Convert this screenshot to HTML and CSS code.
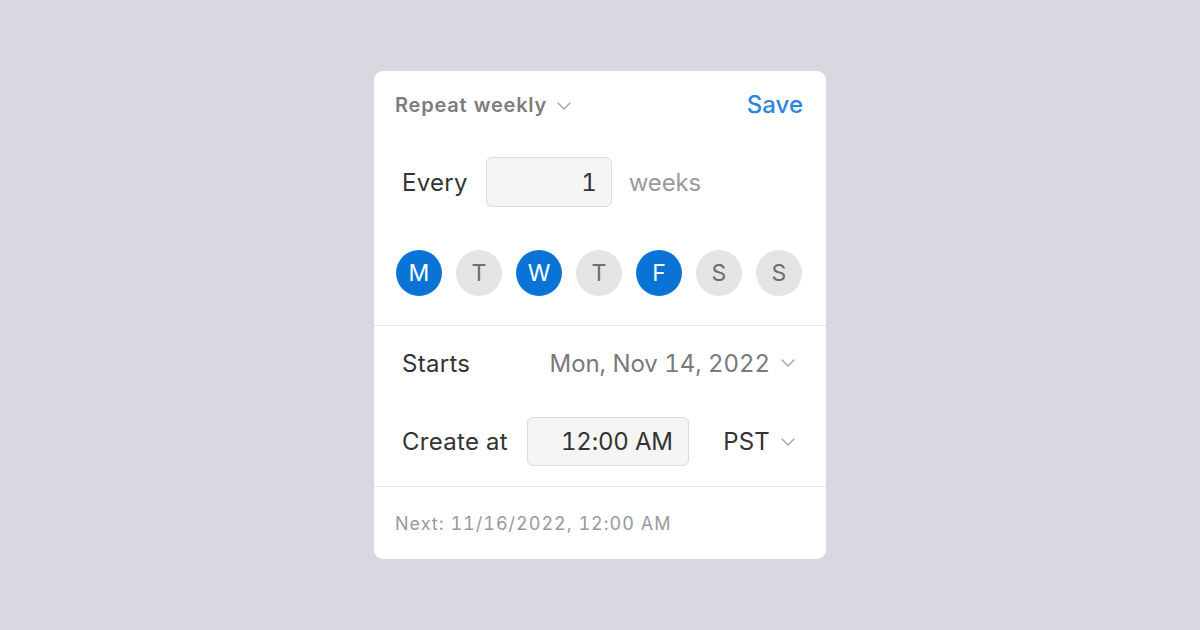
FILE: index.html
```html
<!DOCTYPE html>
<html>
<head>
<meta charset="utf-8">
<link rel="stylesheet" href="styles.css">
</head>
<body>
<div class="card">
  <div class="header">
    <div class="repeat">Repeat weekly
      <svg class="chev chev-h" viewBox="0 0 14 8"><path d="M1 1 L7 7 L13 1" fill="none" stroke="currentColor" stroke-width="1.5" stroke-linecap="round" stroke-linejoin="round"/></svg>
    </div>
    <div class="save">Save</div>
  </div>
  <div class="every-row">
    <span class="label">Every</span>
    <div class="num-box">1</div>
    <span class="unit">weeks</span>
  </div>
  <div class="days">
    <div class="day on">M</div>
    <div class="day">T</div>
    <div class="day on">W</div>
    <div class="day">T</div>
    <div class="day on">F</div>
    <div class="day">S</div>
    <div class="day">S</div>
  </div>
  <div class="divider"></div>
  <div class="row starts">
    <span class="label">Starts</span>
    <div class="select date">Mon, Nov 14, 2022
      <svg class="chev" viewBox="0 0 14 8"><path d="M1 1 L7 7 L13 1" fill="none" stroke="currentColor" stroke-width="1.5" stroke-linecap="round" stroke-linejoin="round"/></svg>
    </div>
  </div>
  <div class="row create">
    <span class="label">Create at</span>
    <div class="time-box">12:00 AM</div>
    <div class="select tz">PST
      <svg class="chev" viewBox="0 0 14 8"><path d="M1 1 L7 7 L13 1" fill="none" stroke="currentColor" stroke-width="1.5" stroke-linecap="round" stroke-linejoin="round"/></svg>
    </div>
  </div>
  <div class="divider lower"></div>
  <div class="next">Next: 11/16/2022, 12:00 AM</div>
</div>
</body>
</html>
```
FILE: styles.css
```css
* { box-sizing: border-box; }
html, body { margin: 0; padding: 0; }
body {
  width: 1200px;
  height: 630px;
  background: #d9d8e0;
  display: flex;
  align-items: center;
  justify-content: center;
  font-family: Inter, "Noto Sans", sans-serif;
  font-variant-numeric: tabular-nums;
  color: #333;
}
.card {
  width: 452px;
  height: 488px;
  background: #fff;
  border-radius: 9px;
  display: flex;
  flex-direction: column;
}
.header {
  display: flex;
  justify-content: space-between;
  align-items: center;
  padding: 20px 23px 0 21px;
  height: 48px;
}
.repeat {
  font-size: 20px;
  font-weight: 600;
  color: #7d7d7d;
  display: flex;
  align-items: center;
  line-height: 28px;
  letter-spacing: 0.8px;
}
.chev {
  width: 14px;
  height: 8px;
  color: #a8a8a8;
  margin-left: 11px;
}
.chev-h { margin-left: 10px; margin-top: 2px; }
.save {
  font-size: 24px;
  font-weight: 500;
  color: #2b86de;
  line-height: 28px;
}
.every-row {
  display: flex;
  align-items: center;
  height: 50px;
  margin-top: 38px;
  padding-left: 28px;
}
.label {
  font-size: 24px;
  color: #333;
  letter-spacing: 0.3px;
}
.num-box {
  width: 126px;
  height: 50px;
  margin-left: 18px;
  background: #f5f5f4;
  border: 1px solid #dcdcdc;
  border-radius: 6px;
  font-size: 24px;
  display: flex;
  align-items: center;
  justify-content: flex-end;
  padding-right: 14px;
  color: #333;
}
.unit {
  font-size: 24px;
  color: #9a9a9a;
  margin-left: 17px;
  letter-spacing: -0.2px;
}
.days {
  display: flex;
  gap: 14px;
  margin-top: 43px;
  padding-left: 22px;
}
.day {
  width: 46px;
  height: 46px;
  border-radius: 50%;
  background: #e4e4e4;
  color: #6e6e6e;
  font-size: 23px;
  display: flex;
  align-items: center;
  justify-content: center;
}
.day.on {
  background: #0a74d6;
  color: #fff;
}
.divider {
  height: 1px;
  background: #e6e6e6;
  margin-top: 29px;
}
.row {
  display: flex;
  align-items: center;
  padding-left: 28px;
  padding-right: 31px;
}
.starts {
  height: 50px;
  margin-top: 12px;
  justify-content: space-between;
}
.select {
  display: flex;
  align-items: center;
  font-size: 24px;
  letter-spacing: 0.2px;
}
.date { color: #7a7a7a; letter-spacing: -0.05px; }
.tz { color: #333; margin-left: auto; }
.create {
  height: 49px;
  margin-top: 29px;
}
.time-box {
  width: 162px;
  height: 49px;
  margin-left: 19px;
  background: #f5f5f4;
  border: 1px solid #dcdcdc;
  border-radius: 6px;
  font-size: 24px;
  display: flex;
  align-items: center;
  padding-left: 33px;
  color: #333;
  letter-spacing: -0.2px;
}
.divider.lower { margin-top: 20px; }
.next {
  padding-left: 21px;
  margin-top: 25px;
  font-size: 18px;
  color: #9a9a9a;
  line-height: 24px;
  letter-spacing: 1px;
}
```
